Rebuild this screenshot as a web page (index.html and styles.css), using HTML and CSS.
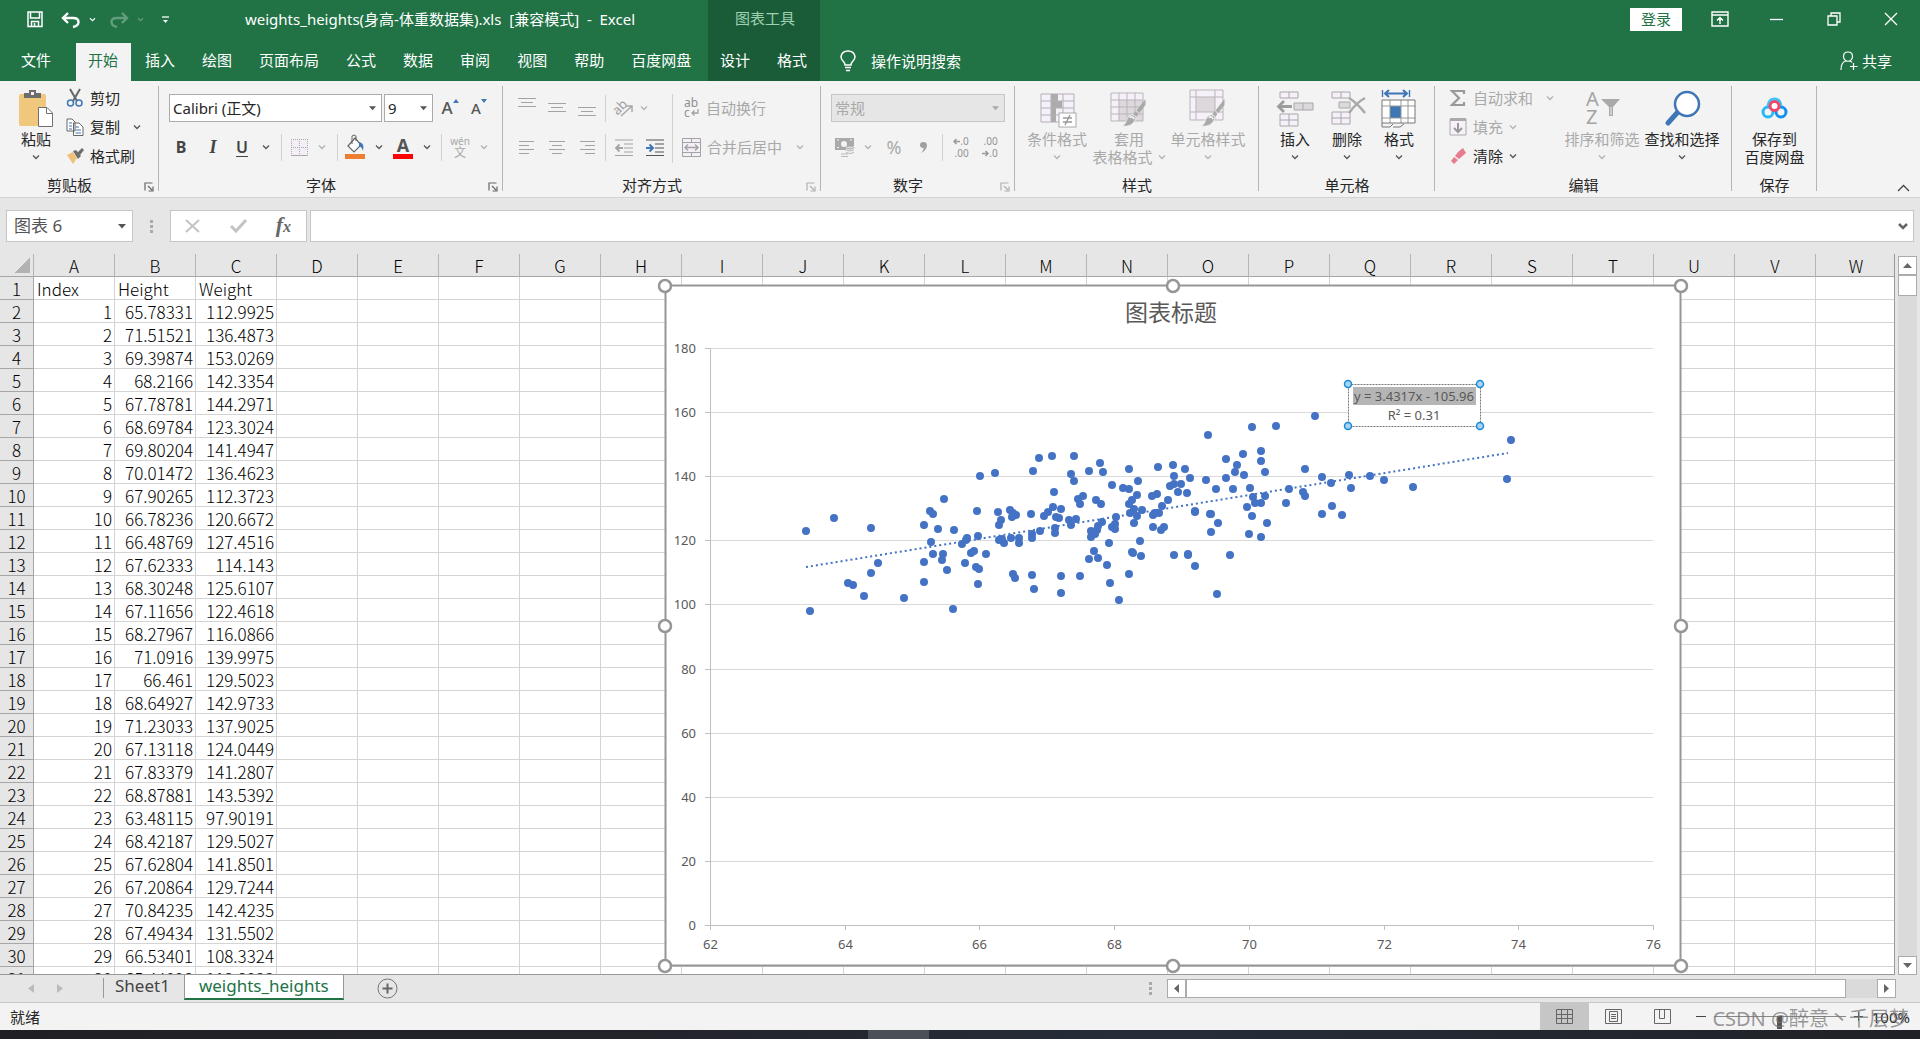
FILE: index.html
```html
<!DOCTYPE html>
<html lang="zh-CN">
<head>
<meta charset="utf-8">
<title>weights_heights(身高-体重数据集).xls - Excel</title>
<link rel="stylesheet" href="styles.css">
</head>
<body>
<svg class="defs" aria-hidden="true">
  <symbol id="chev" viewBox="0 0 8 6"><path d="M1 1.500L4 4.500L7 1.500" fill="none" stroke="currentColor" stroke-width="1.300"/></symbol>
  <symbol id="tri" viewBox="0 0 8 5"><path d="M0 0H8L4 4.500Z" fill="currentColor"/></symbol>
  <symbol id="launch" viewBox="0 0 10 10"><path d="M1 8.500V1H8.500M4 4L8 8M9 4.500V9H4.500" fill="none" stroke="currentColor" stroke-width="1.200"/></symbol>
  <symbol id="brush" viewBox="0 0 28 34"><path d="M27 1V8L20 17L17 14Z" fill="currentColor"/><path d="M16 15L19 18L17 21L13 18Z" fill="currentColor"/><path d="M12 19Q17 20 16 24Q12 33 1 32Q5 29 6 24Q8 19 12 19Z" fill="currentColor" stroke="#f3f3f3"/><path d="M9 22Q13 20 14 24" fill="none" stroke="#f3f3f3" stroke-width="2"/></symbol>
</svg>
<div class="app">
  <header class="top">
    <div class="title-left">
      <div class="quick">
        <button aria-label="保存"><svg width="16" height="17" viewBox="0 0 16 17"><path d="M1 1H15V15.500H1Z M3.500 1V7H12.500V1 M4.500 15.500V10.500H11.500V15.500M7.500 12V15.500" fill="none" stroke="#fff" stroke-width="1.500"/></svg></button>
        <button aria-label="撤消"><svg width="20" height="16" viewBox="0 0 20 16"><path d="M7 1L2 6L7 11M2.500 6H12Q17.500 6 17.500 10Q17.500 14 12 15" fill="none" stroke="#fff" stroke-width="2.400"/></svg></button>
        <button aria-label="撤消选项"><svg width="7" height="5"><use href="#chev"/></svg></button>
        <button class="faded" aria-label="恢复"><svg width="20" height="16" viewBox="0 0 20 16"><path d="M13 1L18 6L13 11M17.500 6H8Q2.500 6 2.500 10Q2.500 14 8 15" fill="none" stroke="#fff" stroke-width="2.400"/></svg></button>
        <button class="faded" aria-label="恢复选项"><svg width="7" height="5"><use href="#chev"/></svg></button>
        <button aria-label="自定义快速访问工具栏"><svg width="7" height="8" viewBox="0 0 7 8"><path d="M0 1H7" stroke="#fff" stroke-width="1.300"/><path d="M1 4H6L3.500 7Z" fill="#fff"/></svg></button>
      </div>
      <div class="doc-name">weights_heights(身高-体重数据集).xls&nbsp; [兼容模式]&nbsp; -&nbsp; Excel</div>
    </div>
    <div class="context-title">图表工具</div>
    <div class="window-tools">
      <button class="login">登录</button>
      <button class="win" aria-label="功能区显示选项"><svg width="18" height="16" viewBox="0 0 18 16"><path d="M1 1H17V15H1ZM1 4H17M9 13V6.500M6 9.500L9 6.500L12 9.500" fill="none" stroke="#fff" stroke-width="1.400"/></svg></button>
      <button class="win" aria-label="最小化"><svg width="14" height="14"><path d="M0 7.500H13" stroke="#fff" stroke-width="1.300"/></svg></button>
      <button class="win" aria-label="还原"><svg width="14" height="14" viewBox="0 0 14 14"><path d="M1 4H10V13H1ZM4 4V1H13V10H10" fill="none" stroke="#fff" stroke-width="1.300"/></svg></button>
      <button class="win" aria-label="关闭"><svg width="14" height="14" viewBox="0 0 14 14"><path d="M1 1L13 13M13 1L1 13" stroke="#fff" stroke-width="1.300"/></svg></button>
    </div>
    <nav class="tabs">
      <button class="file">文件</button><button class="on">开始</button><button>插入</button><button>绘图</button><button>页面布局</button><button>公式</button><button>数据</button><button>审阅</button><button>视图</button><button>帮助</button><button>百度网盘</button>
    </nav>
    <nav class="tabs context"><button>设计</button><button>格式</button></nav>
    <div class="tabs-right">
      <button class="tell"><svg width="16" height="22" viewBox="0 0 16 22"><path d="M5 15Q5 13 3 11Q1 9 1 6.500Q2 1 8 1Q14 1 15 6.500Q15 9 13 11Q11 13 11 15ZM5 17.500H11M6 20.500H10" fill="none" stroke="#fff" stroke-width="1.500"/></svg><span>操作说明搜索</span></button>
      <button class="share"><svg width="18" height="20" viewBox="0 0 18 20"><path d="M8 1Q12.500 1 12.500 5.500Q12.500 8 10.500 9.500Q8 11 5.500 9.500Q3.500 8 3.500 5.500Q3.500 1 8 1ZM1 19Q1 11 6 10M10 10Q11.500 10.500 12 11.500M13.500 12V19M10 15.500H17.500" fill="none" stroke="#fff" stroke-width="1.200"/></svg>共享</button>
    </div>
  </header>

  <div class="ribbon">
    <section class="group g-clip">
      <div class="body">
        <button class="big"><svg width="36" height="38" viewBox="0 0 36 38"><rect x="1" y="5" width="27" height="32" rx="2" fill="#efc87e"/><path d="M6 9V4H11V1H18V4H23V9Z" fill="#6d6d6d"/><rect x="13" y="3" width="3" height="3" fill="#f3f3f3"/><path d="M20.500 18.500H29L34.500 24V37.500H20.500Z" fill="#fff" stroke="#707070"/><path d="M28.500 18.500V24.500H34.500" fill="none" stroke="#707070"/></svg><span>粘贴</span><svg class="ch"><use href="#chev"/></svg></button>
        <div class="stack">
          <button><svg width="18" height="18" viewBox="0 0 18 18"><path d="M4 0L11 12M14 0L7 12" stroke="#666" stroke-width="2"/><circle cx="4.500" cy="14" r="3" fill="none" stroke="#3f76b5" stroke-width="1.500"/><circle cx="13" cy="14" r="3" fill="none" stroke="#3f76b5" stroke-width="1.500"/></svg><span>剪切</span></button>
          <button><svg width="18" height="18" viewBox="0 0 18 18"><path d="M1 1H6L9 4V13H1ZM7.500 5H13L17 9V17.500H7.500Z" fill="#fff" stroke="#666"/><path d="M3 5H6M3 8H6M3 11H6M9.500 9H13M9.500 12H15M9.500 15H15" stroke="#3f76b5"/></svg><span>复制</span><svg class="ch far"><use href="#chev"/></svg></button>
          <button><svg width="18" height="18" viewBox="0 0 18 18"><path d="M1 8L7 5L11 11L7 17Z" fill="#efc07a"/><path d="M7 4L10 3L15 9L12 12Z" fill="#6d6d6d"/><path d="M11 6L16 1L18 3L14 8Z" fill="#6d6d6d"/></svg><span>格式刷</span></button>
        </div>
      </div>
      <footer>剪贴板<button aria-label="剪贴板设置"><svg width="10" height="10"><use href="#launch"/></svg></button></footer>
    </section>

    <section class="group g-font">
      <div class="body two">
        <div class="line font-one">
          <div class="combo name"><input aria-label="字体" value="Calibri (正文)"><svg width="7" height="5"><use href="#tri"/></svg></div>
          <div class="combo size"><input aria-label="字号" value="9"><svg width="7" height="5"><use href="#tri"/></svg></div>
          <button class="grow" aria-label="增大字号"><b>A</b><svg width="6" height="4" viewBox="0 0 6 4"><path d="M0 4H6L3 0Z" fill="#3f76b5"/></svg></button>
          <button class="grow small" aria-label="减小字号"><b>A</b><svg width="6" height="4" viewBox="0 0 6 4"><path d="M0 0H6L3 4Z" fill="#3f76b5"/></svg></button>
        </div>
        <div class="line font-two">
          <button class="fmt"><b>B</b></button><button class="fmt it"><i>I</i></button><button class="fmt"><u>U</u></button>
          <svg class="ch"><use href="#chev"/></svg><i class="sep"></i>
          <button class="off" aria-label="边框"><svg width="17" height="17" viewBox="0 0 17 17"><rect width="17" height="17" fill="#f4eef6"/><path d="M.5 0V16M8.500 0V16M16.500 0V16M0 .5H17M0 8.500H17" stroke="#aaa" stroke-dasharray="1 1"/><path d="M0 16.500H17" stroke="#aaa"/></svg></button>
          <svg class="ch off"><use href="#chev"/></svg><i class="sep"></i>
          <button aria-label="填充颜色"><svg width="20" height="26" viewBox="0 0 20 26"><path d="M3 12L10 4L16 11L9 18Z" fill="#fff" stroke="#666" stroke-width="1.200"/><path d="M7 10V2Q9 0 11 2V7" fill="none" stroke="#666"/><path d="M14 8Q20 9 18 17Q17 13 14 12Z" fill="#3f76b5"/><rect y="20" width="20" height="5" fill="#ed7d31"/></svg></button>
          <svg class="ch"><use href="#chev"/></svg>
          <button class="color" aria-label="字体颜色"><b>A</b></button>
          <svg class="ch"><use href="#chev"/></svg><i class="sep"></i>
          <button class="wen off"><span>wén</span><span>文</span></button>
          <svg class="ch off"><use href="#chev"/></svg>
        </div>
      </div>
      <footer>字体<button aria-label="字体设置"><svg width="10" height="10"><use href="#launch"/></svg></button></footer>
    </section>

    <section class="group g-align">
      <div class="body two cols">
        <div class="rows">
          <div class="line align">
            <button aria-label="顶端对齐"><svg width="18" height="26" viewBox="0 0 18 26"><path d="M0 3.500H18M3 7.500H15M0 11.500H18" stroke="#a3a3a3"/></svg></button>
            <button aria-label="垂直居中"><svg width="18" height="26" viewBox="0 0 18 26"><path d="M0 8.500H18M3 12.500H15M0 16.500H18" stroke="#a3a3a3"/></svg></button>
            <button aria-label="底端对齐"><svg width="18" height="26" viewBox="0 0 18 26"><path d="M0 12.500H18M3 16.500H15M0 20.500H18" stroke="#a3a3a3"/></svg></button>
            <i class="sep"></i>
            <button class="off" aria-label="方向"><svg width="20" height="20" viewBox="0 0 20 20"><text x="-1" y="13" font-size="13" transform="rotate(-45 7 10)" fill="#a0a0a0">ab</text><path d="M7 18L18 8M12 8H18V14" fill="none" stroke="#a9a9a9" stroke-width="1.500"/></svg></button>
            <svg class="ch off"><use href="#chev"/></svg>
          </div>
          <div class="line align">
            <button aria-label="左对齐"><svg width="16" height="15"><path d="M0 1.500H15M0 5.500H10M0 9.500H15M0 13.500H10" stroke="#a3a3a3"/></svg></button>
            <button aria-label="居中"><svg width="16" height="15"><path d="M0 1.500H16M3 5.500H13M0 9.500H16M3 13.500H13" stroke="#a3a3a3"/></svg></button>
            <button aria-label="右对齐"><svg width="16" height="15"><path d="M1 1.500H16M6 5.500H16M1 9.500H16M6 13.500H16" stroke="#a3a3a3"/></svg></button>
            <i class="sep"></i>
            <button aria-label="减少缩进量"><svg width="19" height="17" viewBox="0 0 19 17"><path d="M0 1H18M9 5H18M9 9H18M9 13H18M0 16.500H18" stroke="#a3a3a3"/><path d="M8 9H1M4.500 5.500L1 9L4.500 12.500" fill="none" stroke="#a3a3a3" stroke-width="1.800"/></svg></button>
            <button aria-label="增加缩进量"><svg width="19" height="17" viewBox="0 0 19 17"><path d="M0 1H18M9 5H18M9 9H18M9 13H18M0 16.500H18" stroke="#555" stroke-width="1.200"/><path d="M0 9H7M3.500 5.500L7 9L3.500 12.500" fill="none" stroke="#3f76b5" stroke-width="2"/></svg></button>
          </div>
        </div>
        <i class="sep tall"></i>
        <div class="rows off">
          <button class="line wide"><svg width="18" height="20" viewBox="0 0 18 20"><text x="2" y="9" font-size="12" fill="#8f8f8f">ab</text><text x="2" y="19" font-size="12" fill="#8f8f8f">c</text><path d="M16 11V15H10M12.500 12.500L10 15L12.500 17.500" fill="none" stroke="#a3a3a3" stroke-width="1.300"/></svg><span>自动换行</span></button>
          <button class="line wide"><svg width="19" height="19" viewBox="0 0 19 19"><path d="M.5 .5H18.500V18.500H.5ZM.5 4.500H18.500M.5 14.500H18.500M9.500 .5V4.500M9.500 14.500V18.500" fill="#f4eef6" stroke="#a3a3a3"/><path d="M3 9.500H16M6 6.500L3 9.500L6 12.500M13 6.500L16 9.500L13 12.500" fill="none" stroke="#a3a3a3" stroke-width="1.400"/></svg><span>合并后居中</span><svg class="ch far"><use href="#chev"/></svg></button>
        </div>
      </div>
      <footer>对齐方式<button class="off" aria-label="对齐设置"><svg width="10" height="10"><use href="#launch"/></svg></button></footer>
    </section>

    <section class="group g-num">
      <div class="body two">
        <div class="line"><div class="combo number off"><input aria-label="数字格式" value="常规" disabled><svg width="7" height="5"><use href="#tri"/></svg></div></div>
        <div class="line num-two off">
          <button aria-label="会计数字格式"><svg width="20" height="19" viewBox="0 0 20 19"><path d="M0 0H19V8H11V12H0Z" fill="#a9a9a9"/><circle cx="9" cy="6" r="3" fill="#f3f3f3"/><path d="M2 2H4M15 2H17M2 9.500H4" stroke="#f3f3f3"/><ellipse cx="15" cy="9.500" rx="4" ry="1.500" fill="#ddd" stroke="#a9a9a9"/><path d="M11 12Q15 14 19 12M11 14.500Q15 16.500 19 14.500M6 16H13M6 18.500H13" fill="none" stroke="#b9b9b9"/></svg></button>
          <svg class="ch"><use href="#chev"/></svg>
          <button class="pct">%</button>
          <button aria-label="千位分隔样式"><svg width="7" height="11" viewBox="0 0 7 11"><path d="M3.500 0Q7 0 7 4Q6 9 1 11Q4 8 3.500 6Q0 6 0 3Q0 0 3.500 0Z" fill="#a0a0a0"/></svg></button>
          <i class="sep"></i>
          <button class="dec"><span><svg width="7" height="7" viewBox="0 0 7 7"><path d="M7 3.500H1M3.500 1L1 3.500L3.500 6" fill="none" stroke="#999" stroke-width="1.500"/></svg>.0</span><span>.00</span></button>
          <button class="dec"><span>.00</span><span><svg width="7" height="7" viewBox="0 0 7 7"><path d="M0 3.500H6M3.500 1L6 3.500L3.500 6" fill="none" stroke="#999" stroke-width="1.500"/></svg>.0</span></button>
        </div>
      </div>
      <footer>数字<button class="off" aria-label="数字设置"><svg width="10" height="10"><use href="#launch"/></svg></button></footer>
    </section>

    <section class="group g-style off">
      <div class="body">
        <button class="big"><svg width="38" height="38" viewBox="0 0 38 38"><rect x="3" y="5" width="33" height="28" fill="#f6f0f8"/><path d="M13 5H20V12H24V19H18V33H13Z" fill="#acacac"/><path d="M3 5H36V33H3ZM3 12H36M3 19H36M3 26H36M13 5V33M25 5V33" fill="none" stroke="#b3afb4"/><rect x="21" y="24" width="17" height="14" fill="#fff" stroke="#aaa"/><path d="M25 29H34M25 33H34M32 26L27 36" stroke="#999" stroke-width="1.400"/></svg><span>条件格式</span><svg class="ch"><use href="#chev"/></svg></button>
        <button class="big"><svg width="38" height="38" viewBox="0 0 38 38"><rect x="1" y="4" width="32" height="28" fill="#f6f0f8"/><rect x="9" y="11" width="24" height="21" fill="#dcd8dc"/><path d="M1 4H33V32H1ZM1 11H33M1 18H33M1 25H33M9 4V32M17 4V32M25 4V32" fill="none" stroke="#b9b5ba"/><use href="#brush" x="11" y="9" width="26" height="30"/></svg><span>套用</span><span class="second">表格格式<svg class="ch"><use href="#chev"/></svg></span></button>
        <button class="big"><svg width="38" height="38" viewBox="0 0 38 38"><rect x="1" y="1" width="33" height="30" fill="#f6f0f8"/><rect x="7" y="8" width="19" height="15" fill="#dcd8dc"/><path d="M1 1H34V31H1ZM1 8H34M1 23H34M7 1V31M26 1V31" fill="none" stroke="#b9b5ba"/><use href="#brush" x="11" y="9" width="26" height="30"/></svg><span>单元格样式</span><svg class="ch"><use href="#chev"/></svg></button>
      </div>
      <footer>样式</footer>
    </section>

    <section class="group g-cells">
      <div class="body">
        <button class="big"><svg width="38" height="38" viewBox="0 0 38 38"><path d="M4 3H22V9H4ZM13 3V9M4 25H22V37H4ZM4 31H22M13 25V37" fill="#f6f0f8" stroke="#aaa6ab"/><path d="M18 14H37V21H18ZM27 14V21" fill="#dcd8dc" stroke="#aaa6ab"/><path d="M16 17.500H3M8 12L2.500 17.500L8 23" fill="none" stroke="#9d9d9d" stroke-width="2.800"/></svg><span>插入</span><svg class="ch"><use href="#chev"/></svg></button>
        <button class="big"><svg width="38" height="38" viewBox="0 0 38 38"><path d="M4 3H22V9H4ZM13 3V9M4 23H22V35H4ZM4 29H22M13 23V35" fill="#f6f0f8" stroke="#aaa6ab"/><path d="M11 13H22V19H11Z" fill="#dcd8dc" stroke="#aaa6ab"/><path d="M21 9Q29 14 37 24M37 9Q28 14 21 24" fill="none" stroke="#a9a9a9" stroke-width="2.500"/></svg><span>删除</span><svg class="ch"><use href="#chev"/></svg></button>
        <button class="big"><svg width="38" height="38" viewBox="0 0 38 38"><path d="M2.500 1V8M29.500 1V8" stroke="#3f76b5" stroke-width="1.400"/><path d="M5 4.500H27M9 1L5 4.500L9 8M23 1L27 4.500L23 8" fill="none" stroke="#3f76b5" stroke-width="2"/><rect x="2" y="11" width="33" height="23" fill="#fff"/><rect x="10" y="17" width="11" height="12" fill="#3f76b5"/><path d="M10 11V34M21 11V34M28 11V34M2 17H35M2 29H35" stroke="#999" fill="none"/><path d="M2 11H35V34H2ZM2 34V38H10L13 35M13 38H20L24 35" fill="none" stroke="#777"/></svg><span>格式</span><svg class="ch"><use href="#chev"/></svg></button>
      </div>
      <footer>单元格</footer>
    </section>

    <section class="group g-edit">
      <div class="body">
        <div class="stack">
          <button class="off"><svg width="18" height="18" viewBox="0 0 18 18"><path d="M15 5V2H3L10 9L3 16H15V13" fill="none" stroke="#999" stroke-width="2.200"/></svg><span>自动求和</span><svg class="ch far"><use href="#chev"/></svg></button>
          <button class="off"><svg width="18" height="18" viewBox="0 0 18 18"><path d="M1 1H17V17H1Z" fill="#f6f0f8" stroke="#aaa"/><path d="M1 1.500H17" stroke="#aaa" stroke-width="3"/><path d="M9 5V14M5 10L9 14L13 10" fill="none" stroke="#999" stroke-width="2"/></svg><span>填充</span><svg class="ch"><use href="#chev"/></svg></button>
          <button><svg width="18" height="18" viewBox="0 0 18 18"><path d="M9 5L14 1L17 6L10 12L6 9ZM5 10L9 13L5 17L2 14Z" fill="#e77c8e"/></svg><span>清除</span><svg class="ch"><use href="#chev"/></svg></button>
        </div>
        <button class="big off"><svg width="38" height="38" viewBox="0 0 38 38"><text x="3" y="17" font-size="20" fill="#a4a4a4">A</text><text x="3" y="35" font-size="20" fill="#a4a4a4">Z</text><path d="M18 10H37L30 18V27H26V18Z" fill="#a9a9a9"/><path d="M28 18V26" stroke="#f3f3f3"/></svg><span>排序和筛选</span><svg class="ch"><use href="#chev"/></svg></button>
        <button class="big"><svg width="38" height="38" viewBox="0 0 38 38"><path d="M14 24L5 34" stroke="#3f76b5" stroke-width="5" stroke-linecap="round"/><circle cx="24" cy="15" r="12" fill="#fff" stroke="#3f76b5" stroke-width="2.500"/></svg><span>查找和选择</span><svg class="ch"><use href="#chev"/></svg></button>
      </div>
      <footer>编辑</footer>
    </section>

    <section class="group g-save">
      <div class="body">
        <button class="big"><svg width="38" height="38" viewBox="0 0 38 38"><circle cx="12" cy="23" r="5" fill="none" stroke="#2bb7f5" stroke-width="3"/><circle cx="25" cy="23" r="5" fill="none" stroke="#1490f0" stroke-width="3"/><path d="M12 17Q13 10 18.500 10Q24 10 25 17" fill="none" stroke="#3cc3fa" stroke-width="3"/><circle cx="18.500" cy="17" r="4.500" fill="#fff" stroke="#f0476a" stroke-width="3"/></svg><span>保存到</span><span class="second">百度网盘</span></button>
      </div>
      <footer>保存</footer>
    </section>
    <button class="collapse" aria-label="折叠功能区"><svg width="13" height="8" viewBox="0 0 13 8"><path d="M1 7L6.500 1.500L12 7" fill="none" stroke="#444" stroke-width="1.300"/></svg></button>
  </div>

  <div class="formula">
    <div class="box name-box"><input aria-label="名称框" value="图表 6"><svg width="8" height="5"><use href="#tri"/></svg></div>
    <i class="dots"></i>
    <div class="box tools">
      <button aria-label="取消"><svg width="16" height="14" viewBox="0 0 16 14"><path d="M1 1L14 13M14 1L1 13" stroke="#c3c3c3" stroke-width="2"/></svg></button>
      <button aria-label="输入"><svg width="17" height="14" viewBox="0 0 17 14"><path d="M1 7L6 12L16 1" fill="none" stroke="#c3c3c3" stroke-width="3"/></svg></button>
      <button class="fx"><i>f</i><i class="x">x</i></button>
    </div>
    <div class="box entry"><input aria-label="编辑栏"><svg width="10" height="7" viewBox="0 0 10 7"><path d="M1 1L5 5L9 1" fill="none" stroke="#666" stroke-width="2.500"/></svg></div>
  </div>

  <main class="work">
    <div class="sheet">
      <table class="grid"><thead><tr id="letters"></tr></thead><tbody id="cells"></tbody></table>
      <svg class="chart" id="chart" width="1032" height="696" viewBox="657 278 1032 696" role="img" aria-label="图表标题">
        <rect x="665.500" y="285.500" width="1015" height="680" fill="#fff" stroke="#969696" stroke-width="2"/>
        <g id="axes" class="axes"></g>
        <text class="chart-title" x="1171" y="321">图表标题</text>
        <path d="M806 567L1508 453" stroke="#4472c4" stroke-width="2" stroke-dasharray="2 3" fill="none"/>
        <g id="dots" fill="#4472c4"></g>
        <rect x="1348.500" y="384.500" width="132" height="42" fill="#fff" stroke="#777" stroke-dasharray="2 1"/>
        <rect x="1353" y="387" width="123" height="18" fill="#b5b5b5"/>
        <text class="equation" x="1414" y="401">y = 3.4317x - 105.96</text>
        <text class="equation" x="1414" y="420">R² = 0.31</text>
        <g fill="#a8d3f5" stroke="#1a8ad6" stroke-width="1.500"><circle cx="1348" cy="384" r="3.500"/><circle cx="1480" cy="384" r="3.500"/><circle cx="1348" cy="426" r="3.500"/><circle cx="1480" cy="426" r="3.500"/></g>
        <g fill="#fff" stroke="#969696" stroke-width="2.500"><circle cx="665" cy="286" r="6"/><circle cx="1173" cy="286" r="6"/><circle cx="1681" cy="286" r="6"/><circle cx="665" cy="626" r="6"/><circle cx="1681" cy="626" r="6"/><circle cx="665" cy="966" r="6"/><circle cx="1173" cy="966" r="6"/><circle cx="1681" cy="966" r="6"/></g>
      </svg>
    </div>
    <div class="vscroll">
      <button aria-label="向上滚动"><svg width="9" height="5" viewBox="0 0 9 5"><path d="M0 5H9L4.500 0Z" fill="#666"/></svg></button>
      <i class="thumb"></i>
      <button class="down" aria-label="向下滚动"><svg width="9" height="5" viewBox="0 0 9 5"><path d="M0 0H9L4.500 5Z" fill="#666"/></svg></button>
    </div>
  </main>

  <div class="sheets">
    <button class="nav" aria-label="上一张"><svg width="6" height="10"><path d="M6 0V9L0 4.500Z" fill="#bbb"/></svg></button>
    <button class="nav" aria-label="下一张"><svg width="6" height="10"><path d="M0 0V9L6 4.500Z" fill="#bbb"/></svg></button>
    <button class="tab">Sheet1</button>
    <button class="tab on">weights_heights</button>
    <button class="add" aria-label="新工作表"><svg width="21" height="21" viewBox="0 0 21 21"><circle cx="10.500" cy="10.500" r="9.500" fill="none" stroke="#777"/><path d="M5.500 10.500H15.500M10.500 5.500V15.500" stroke="#666" stroke-width="2"/></svg></button>
    <i class="dots"></i>
    <div class="hscroll">
      <button aria-label="向左滚动"><svg width="5" height="9"><path d="M5 0V9L0 4.500Z" fill="#666"/></svg></button>
      <i class="thumb"></i>
      <button class="right" aria-label="向右滚动"><svg width="5" height="9"><path d="M0 0V9L5 4.500Z" fill="#666"/></svg></button>
    </div>
  </div>

  <div class="status">
    <span>就绪</span>
    <button class="view on" aria-label="普通"><svg width="17" height="15" viewBox="0 0 17 15"><path d="M.5 .5H16.500V14.500H.5ZM.5 5.500H16.500M.5 9.500H16.500M5.500 .5V14.500M11.500 .5V14.500" fill="none" stroke="#666"/></svg></button>
    <button class="view" aria-label="页面布局"><svg width="17" height="15" viewBox="0 0 17 15"><path d="M.5 .5H16.500V14.500H.5ZM4.500 2.500H12.500V12.500H4.500ZM6 5.500H11M6 7.500H11M6 9.500H11" fill="none" stroke="#666"/></svg></button>
    <button class="view" aria-label="分页预览"><svg width="17" height="15" viewBox="0 0 17 15"><path d="M.5 .5H16.500V14.500H.5ZM5.500 .5V9.500H10.500V.5" fill="none" stroke="#666"/></svg></button>
    <div class="zoom">
      <button aria-label="缩小"><svg width="10" height="10"><path d="M0 4.500H10" stroke="#444"/></svg></button>
      <i class="rail"><i></i></i>
      <button aria-label="放大"><svg width="10" height="10"><path d="M0 4.500H9M4.500 0V9" stroke="#444"/></svg></button>
      <span>100%</span>
    </div>
    <div class="mark">CSDN @醉意丶千层梦</div>
  </div>
  <div class="taskbar"><i></i></div>
</div>
<script src="app.js"></script>
</body>
</html>
```
FILE: styles.css
```css
* { box-sizing: border-box; }
body { margin: 0; font: 15px/18px "Noto Sans", "Noto Sans CJK SC", sans-serif; color: #262626; }
button { border: 0; background: none; padding: 0; margin: 0; font: inherit; color: inherit; white-space: nowrap; }
input { border: 0; background: none; padding: 0; font: inherit; color: inherit; min-width: 0; flex: 1; outline: 0; }
svg { display: block; flex: none; overflow: visible; }
.defs { position: absolute; width: 0; height: 0; }
.ch { width: 8px; height: 6px; color: #555; }
.off { color: #a9a9a9; }
.off .ch, .ch.off { color: #b3b3b3; }
.app { display: flex; flex-direction: column; height: 100vh; overflow: hidden; background: #e6e6e6; }

.top { display: grid; grid-template: 43px 38px / 708px 112px 1fr; background: #217346; color: #fff; }
.title-left { display: flex; align-items: center; padding-bottom: 6px; }
.quick { display: flex; align-items: center; padding: 2px 0 0 27px; width: 245px; }
.quick button:nth-child(2) { margin-left: 18px; }
.quick button:nth-child(3) { margin-left: 8px; }
.quick button:nth-child(4) { margin-left: 13px; }
.quick button:nth-child(5) { margin-left: 8px; }
.quick button:nth-child(6) { margin-left: 18px; }
.faded { opacity: .3; }
.doc-name { white-space: nowrap; }
.context-title { background: #1a5c38; color: #9fd0b2; padding: 9px 0 0 27px; }
.window-tools { display: flex; justify-content: flex-end; align-items: center; padding: 0 1px 5px 0; }
.login { width: 52px; height: 23px; background: #fff; color: #217346; margin-right: 9px; }
.win { width: 57px; display: grid; place-items: center; }
.tabs { display: flex; gap: 2px; }
.tabs button { padding: 0 13px 4px 12px; }
.tabs .file { padding: 0 23px 4px 21px; }
.tabs .on { background: #f3f3f3; color: #217346; }
.tabs.context { background: #1a5c38; }
.tabs-right { display: flex; justify-content: space-between; padding: 0 28px 2px 20px; }
.tell, .share { display: flex; align-items: center; }
.tell { gap: 15px; }
.share { gap: 4px; }

.ribbon { display: flex; height: 117px; background: #f3f3f3; border-bottom: 1px solid #d2d2d2; }
.group { position: relative; flex: none; }
.group::after { content: ""; position: absolute; right: 0; top: 5px; bottom: 6px; width: 1px; background: #b5b5b5; }
.group footer { display: flex; justify-content: center; align-items: center; height: 19px; color: #262626; position: relative; padding-right: 20px; }
.group footer button { position: absolute; right: 5px; top: 7px; color: #666; }
.group footer button.off { color: #b0b0b0; }
.body { display: flex; height: 94px; }
.g-clip { width: 159px; } .g-clip .body { padding-left: 6px; }
.g-font { width: 344px; } .g-align { width: 318px; } .g-num { width: 194px; }
.g-style { width: 244px; } .g-style .body { padding-left: 6px; }
.g-cells { width: 176px; } .g-cells .body { padding-left: 10px; }
.g-edit { width: 297px; } .g-edit .body { padding-left: 14px; }
.g-save { width: 85px; } .g-save .body { justify-content: center; }
.g-style footer, .g-cells footer, .g-edit footer, .g-save footer { padding-right: 0; }
.big { display: flex; flex-direction: column; align-items: center; padding-top: 8px; width: 60px; }
.big > span { height: 18px; }
.big > svg:first-child { margin-bottom: 3px; }
.big > .ch { margin-top: 6px; }
.second { display: flex; align-items: center; gap: 5px; }
.g-style .big { width: 72px; } .g-style .big:last-child { width: 86px; }
.g-cells .big { width: 52px; }
.g-edit .big { width: 80px; }
.stack { display: flex; flex-direction: column; padding-top: 2px; width: 86px; }
.stack button { display: flex; align-items: center; height: 29px; gap: 6px; }
.g-edit .stack { width: 113px; }
.stack .far { margin-left: 7px; }
.body.two { flex-direction: column; gap: 11px; padding-top: 13px; }
.body.two.cols { flex-direction: row; gap: 0; }
.rows { display: flex; flex-direction: column; gap: 11px; }
.line { display: flex; align-items: center; height: 28px; }
.line button { display: flex; justify-content: center; align-items: center; }
.sep { width: 1px; height: 27px; background: #d0d0d0; justify-self: center; }
.sep.tall { height: 69px; margin: 0 9px 0 2px; }
.combo { display: flex; align-items: center; height: 28px; background: #fff; border: 1px solid #ababab; padding: 0 5px 0 3px; color: #262626; }
.combo svg { color: #555; }
.combo.name { width: 213px; margin-left: 10px; }
.combo.size { width: 49px; margin-left: 2px; }
.combo.number { width: 174px; margin-left: 10px; background: #e6e6e6; border-color: #c6c6c6; }
.combo.off, .combo.off svg { color: #a9a9a9; }
.grow { width: 34px; color: #555; }
.grow b { font-size: 17px; font-weight: 500; }
.grow svg { margin-bottom: 14px; }
.grow.small { width: 24px; } .grow.small b { font-size: 15px; }
.font-two { display: grid; padding-left: 6px; grid-template-columns: 32px 32px 26px 22px 8px 28px 18px 12px 24px 24px 24px 24px 4px 34px 14px; justify-items: center; }
.fmt { font-size: 16px; color: #444; }
.it { font-family: "Liberation Serif", serif; font-weight: bold; font-size: 18px; }
.fmt u { font-weight: 600; text-underline-offset: 3px; }
.color { width: 20px; height: 24px; border-bottom: 5px solid #f00; color: #555; font-size: 18px; }
.font-two .wen { flex-direction: column; font-size: 12px; line-height: 12px; }
.font-two .wen span:first-child { font-size: 10px; }
.align { display: grid; padding-left: 9px; grid-template-columns: 30px 30px 30px 6px 32px 30px; justify-items: center; }
.align .ch { justify-self: start; }
.wide { gap: 6px; }
.line.wide { justify-content: flex-start; }
.wide .far { margin-left: 8px; }
.num-two { display: grid; padding-left: 10px; grid-template-columns: 27px 20px 32px 26px 12px 26px 32px; justify-items: center; }
.pct { font-size: 18px; }
.num-two .dec { flex-direction: column; align-items: flex-end; font-size: 10px; line-height: 12px; color: #949494; }
.dec span { display: flex; align-items: center; }
.collapse { margin: auto 10px 5px auto; }

.formula { display: flex; padding: 12px 6px; height: 56px; flex: none; }
.box { display: flex; align-items: center; height: 32px; background: #fff; border: 1px solid #c6c6c6; }
.name-box { width: 127px; padding: 0 6px 0 7px; font-size: 17px; color: #555; }
.dots { width: 3px; height: 13px; align-self: center; background: repeating-linear-gradient(#aaa 0 3px, transparent 3px 5px); }
.formula .dots { margin: 0 17px; }
.tools { width: 137px; justify-content: space-between; padding: 0 15px 0 14px; }
.fx { font: italic bold 22px/22px "Liberation Serif", serif; color: #666; }
.fx .x { font-size: 16px; }
.entry { flex: 1; margin-left: 3px; padding-right: 5px; }

.work { display: flex; flex: 1; min-height: 0; }
.sheet { position: relative; flex: 1; min-width: 0; overflow: hidden; background: #fff; border-right: 1px solid #999; border-bottom: 1px solid #999; }
.grid { table-layout: fixed; border-collapse: separate; border-spacing: 0; width: 1897px; font: 300 17px/20px "Noto Sans CJK SC", sans-serif; color: #000; }
.grid th, .grid td { height: 23px; padding: 2px 2px 0 3px; border-right: 1px solid #d4d4d4; border-bottom: 1px solid #d4d4d4; white-space: nowrap; }
.grid th { background: #e6e6e6; font-weight: 300; border-color: #a6a6a6; padding: 2px 0 0; }
.grid thead th { width: 81px; border-right-color: #b5b5b5; }
.grid thead th:first-child { width: 34px; background: linear-gradient(135deg, transparent 50%, #b2b2b2 50%) 15px 4px / 15px 15px no-repeat #e6e6e6; }
.grid td { text-align: right; }
.grid .text { text-align: left; }
.chart { position: absolute; left: 657px; top: 24px; }
.axes { font-size: 13px; fill: #595959; }
.axes text { text-anchor: middle; }
.axes .y { text-anchor: end; }
.axes line { stroke: #d9d9d9; }
.axes .tick { stroke: #bfbfbf; }
.chart-title { font-size: 23px; fill: #595959; text-anchor: middle; }
.equation { font-size: 13px; fill: #595959; text-anchor: middle; }
.vscroll { width: 25px; padding: 2px 3px 0; display: flex; flex-direction: column; background: linear-gradient(#dadada, #dadada) 3px 2px / 19px 100% no-repeat; }
.vscroll button, .hscroll button { width: 19px; height: 19px; flex: none; display: grid; place-items: center; background: #fff; border: 1px solid #ababab; }
.vscroll .thumb { height: 21px; background: #fff; border: 1px solid #ababab; }
.vscroll .down { margin-top: auto; }

.sheets { display: flex; height: 28px; flex: none; border-bottom: 1px solid #c6c6c6; padding-left: 28px; }
.nav { width: 6px; margin-right: 23px; }
.tab { color: #444; font: 17px/20px "Noto Sans", sans-serif; padding: 0 14px 6px 12px; }
.tab:not(.on) { background: linear-gradient(#999, #999) 0 3px / 1px 20px no-repeat; margin-left: 17px; }
.tab.on { height: 25px; padding: 0 14px 2px; background: #fff; color: #217346; border: 1px solid #999; border-width: 0 1px 2px; border-bottom-color: #217346; }
.add { margin-left: 33px; }
.sheets .dots { margin-left: auto; }
.hscroll { display: flex; width: 729px; height: 19px; margin: 4px 24px 0 15px; background: #dadada; }
.hscroll .thumb { width: 660px; background: #fff; border: 1px solid #ababab; }
.hscroll .right { margin-left: auto; }

.status { display: flex; align-items: center; height: 27px; flex: none; background: #f3f3f3; position: relative; padding: 0 10px; }
.status > span { margin-right: auto; }
.view { width: 49px; height: 27px; display: grid; place-items: center; }
.view.on { background: #c6c6c6; }
.zoom { display: flex; align-items: center; gap: 8px; padding-left: 9px; width: 223px; }
.rail { flex: 1; height: 1px; background: #888; display: grid; place-items: center; }
.rail i { width: 5px; height: 13px; background: #555; }
.mark { position: absolute; right: 11px; top: 4px; font-size: 20px; line-height: 24px; color: rgba(120, 120, 120, .75); white-space: nowrap; }
.taskbar { height: 9px; flex: none; background: linear-gradient(90deg, #202024, #23242b 35%, #262d39 60%, #202126); display: flex; }
.taskbar i { width: 61px; margin-left: 868px; background: #4b4f58; }
```
FILE: app.js
```js
const heights = "65.78331 71.51521 69.39874 68.2166 67.78781 68.69784 69.80204 70.01472 67.90265 66.78236 66.48769 67.62333 68.30248 67.11656 68.27967 71.0916 66.461 68.64927 71.23033 67.13118 67.83379 68.87881 63.48115 68.42187 67.62804 67.20864 70.84235 67.49434 66.53401 65.44098".split(" ");
const weights = "112.9925 136.4873 153.0269 142.3354 144.2971 123.3024 141.4947 136.4623 112.3723 120.6672 127.4516 114.143 125.6107 122.4618 116.0866 139.9975 129.5023 142.9733 137.9025 124.0449 141.2807 143.5392 97.90191 129.5027 141.8501 129.7244 142.4235 131.5502 108.3324 113.8922".split(" ");
const columns = "ABCDEFGHIJKLMNOPQRSTUVW".split("");
document.getElementById("letters").innerHTML = "<th></th>" + columns.map(c => `<th>${c}</th>`).join("");
const blank = "<td></td>".repeat(20);
let rows = `<tr><th>1</th><td class="text">Index</td><td class="text">Height</td><td class="text">Weight</td>${blank}</tr>`;
heights.forEach((h, i) => { rows += `<tr><th>${i + 2}</th><td>${i + 1}</td><td>${h}</td><td>${weights[i]}</td>${blank}</tr>`; });
document.getElementById("cells").innerHTML = rows;

// axes: value 0 sits at y 925, 180 at y 348; 62 at x 710, 76 at x 1653
let axes = "";
for (let v = 0; v <= 180; v += 20) {
  const y = Math.round(925 - v * 577 / 180) + .5;
  axes += `<line x1="710" x2="1653" y1="${y}" y2="${y}"${v ? "" : ' class="tick"'}/><line class="tick" x1="705" x2="710" y1="${y}" y2="${y}"/><text class="y" x="696" y="${y + 4}">${v}</text>`;
}
for (let v = 62; v <= 76; v += 2) {
  const x = Math.round(710 + (v - 62) * 943 / 14) + .5;
  axes += `<line class="tick" x1="${x}" x2="${x}" y1="925" y2="930"/><text x="${x}" y="949">${v}</text>`;
}
axes += '<line class="tick" x1="710.5" x2="710.5" y1="348" y2="925"/>';
document.getElementById("axes").innerHTML = axes;

const points = `806,531 834,518 871,528 871,573 878,563 848,583 853,585 864,596 810,611 904,598 953,609
924,525 930,511 933,514 944,499 938,529 954,530 931,542 924,562 933,554 943,554 942,560 947,570 924,582
962,544 966,540 967,538 978,536 965,563 971,553 974,551 986,554 976,567 979,569 978,584 977,511 980,476 995,473
998,512 1001,520 999,525 1010,510 1016,515 1012,517 1013,513 999,540 1004,543 1002,539 1011,538 1019,538 1019,543
1013,574 1015,578 1031,514 1033,471 1039,458 1052,456 1074,456 1071,474 1074,481 1054,492 1053,507 1048,512 1044,516
1061,509 1056,517 1059,518 1069,520 1071,525 1076,519 1055,528 1055,533 1040,531 1032,534 1032,538 1032,575 1034,589
1061,576 1061,593 1080,576 1078,499 1083,496 1080,504 1096,500 1101,504 1089,471 1100,463 1103,472 1112,485
1091,531 1091,537 1095,534 1098,526 1102,522 1097,530 1116,517 1115,524 1112,527 1115,529 1109,543 1094,551 1089,559
1098,558 1107,565 1110,583 1119,600 1129,469 1138,481 1123,488 1129,489 1137,495 1132,500 1129,504 1134,509 1130,513
1142,510 1137,516 1134,523 1140,541 1132,552 1133,553 1141,556 1129,574 1158,467 1173,465 1185,469 1174,476 1190,478
1170,486 1174,484 1181,484 1178,492 1187,493 1152,496 1157,494 1168,500 1162,506 1153,515 1159,513 1155,513 1153,527
1164,527 1161,530 1195,511 1195,512 1174,555 1188,554 1188,555 1195,566 1206,480 1216,489 1233,489 1226,459 1226,478
1243,454 1237,465 1235,472 1244,475 1261,451 1261,461 1265,472 1208,435 1250,488 1253,497 1265,496 1255,503 1261,503
1247,507 1252,516 1267,523 1249,534 1261,537 1210,514 1211,514 1218,523 1211,532 1230,555 1217,594 1286,503 1289,489
1303,492 1305,496 1305,469 1322,477 1331,483 1322,514 1332,506 1342,515 1252,427 1276,426 1315,416 1349,475 1351,488
1370,476 1384,480 1413,487 1507,479 1511,440`;
document.getElementById("dots").innerHTML = points.split(/\s+/).map(p => {
  const [x, y] = p.split(",");
  return `<circle cx="${x}" cy="${y}" r="4"/>`;
}).join("");
```
